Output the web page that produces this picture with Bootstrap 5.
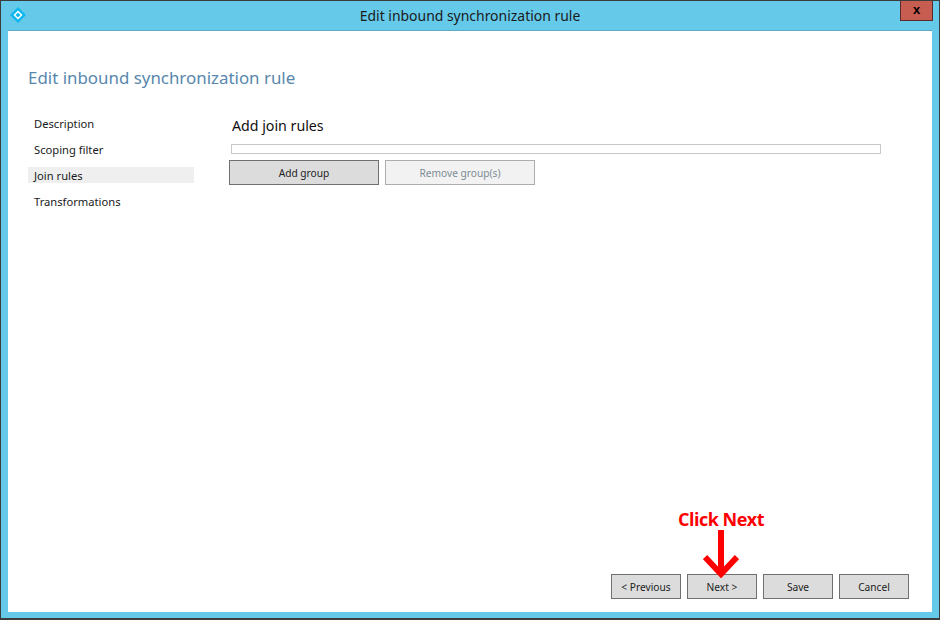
<!DOCTYPE html>
<html lang="en">
<head>
<meta charset="utf-8">
<title>Edit inbound synchronization rule</title>
<link href="https://cdn.jsdelivr.net/npm/bootstrap@5.3.0/dist/css/bootstrap.min.css" rel="stylesheet">
<style>
html,body{height:620px;overflow:hidden;margin:0}
body{font-family:"Noto Sans","Open Sans",sans-serif;font-size:11px;color:#1a1a1a;background:#65c9ea}
.win{width:940px;height:620px;border:1px solid #3c3c3c;border-bottom-width:2px;background:#65c9ea;position:relative}
.titlebar{height:29px;padding-top:1px;font-size:13.95px;color:#1a1a1a;position:relative}
.app-ico{position:absolute;left:9px;top:6px}
.closebtn{position:absolute;right:6px;top:0;width:33px;height:20px;background:#c75c50;border:1px solid #5a2b2b;border-top:0;color:#000;font:bold 13px/17px "Liberation Sans",sans-serif;text-align:center}
.client{margin:0 7px 7px 7px;height:582px;background:#fff;position:relative;padding:36px 21px 0 20px;border-top:1px solid #5fa9c2}
.maintitle{font-size:16.900px;font-weight:400;line-height:22px;color:#5787ad;margin:0 0 26px}
.side{width:166px}
.sideitem{height:16px;line-height:17px;margin-bottom:10px;padding-left:6px;font-size:11.200px}
.sideitem.on{background:#efefef}
.pane{margin-left:35px;width:652px;margin-top:1px}
.subhead{font-size:14.200px;line-height:20px;margin:0 0 8px 3px;color:#111}
.track{height:10px;border:1px solid #c8c8c8;background:#fff;margin-left:2px;width:650px}
.btnrow{gap:6px;margin-top:6px}
.wbtn{display:flex;align-items:center;justify-content:center;background:#dcdcdc;border:1px solid #707070;font-size:10.200px;line-height:25px;padding:1px 0 0;color:#222;border-radius:0}
.wbtn.big{width:150px;height:25px}
.wbtn.off{background:#f2f2f2;border-color:#adadad;color:#7d8c94}
.foot{position:absolute;right:23px;bottom:13px;gap:6px}
.wbtn.small{width:70px;height:25px}
.callout{position:absolute;left:668px;top:477px;width:90px;white-space:nowrap;display:flex;justify-content:center;font:bold 18px/22px "Open Sans",sans-serif;letter-spacing:-.5px;color:#f00}
.arrow{position:absolute;left:695px;top:499px}
</style>
</head>
<body>
<div class="win">
  <div class="titlebar d-flex align-items-center justify-content-center">
    <svg class="app-ico" width="16" height="16" viewBox="0 0 16 16"><path d="M8 0l8 8-8 8-8-8z" fill="#0fb7f0"/><path d="M8 4.500L11.500 8 8 11.500 4.500 8z" fill="none" stroke="#fff" stroke-width="1.500"/></svg>
    <span>Edit inbound synchronization rule</span>
    <div class="closebtn">x</div>
  </div>
  <div class="client">
    <h1 class="maintitle">Edit inbound synchronization rule</h1>
    <div class="d-flex">
      <div class="side">
        <div class="sideitem">Description</div>
        <div class="sideitem">Scoping filter</div>
        <div class="sideitem on">Join rules</div>
        <div class="sideitem">Transformations</div>
      </div>
      <div class="pane">
        <div class="subhead">Add join rules</div>
        <div class="track"></div>
        <div class="d-flex btnrow">
          <button type="button" class="btn wbtn big">Add group</button>
          <button type="button" class="btn wbtn big off">Remove group(s)</button>
        </div>
      </div>
    </div>
    <div class="foot d-flex">
      <button type="button" class="btn wbtn small">&lt; Previous</button>
      <button type="button" class="btn wbtn small">Next &gt;</button>
      <button type="button" class="btn wbtn small">Save</button>
      <button type="button" class="btn wbtn small">Cancel</button>
    </div>
    <div class="callout"><span>Click Next</span></div>
    <svg class="arrow" width="36" height="48" viewBox="0 0 36 48"><path d="M18 0V43M2 27L18 44 34 27" fill="none" stroke="#f00" stroke-width="6"/></svg>
  </div>
</div>
</body>
</html>
